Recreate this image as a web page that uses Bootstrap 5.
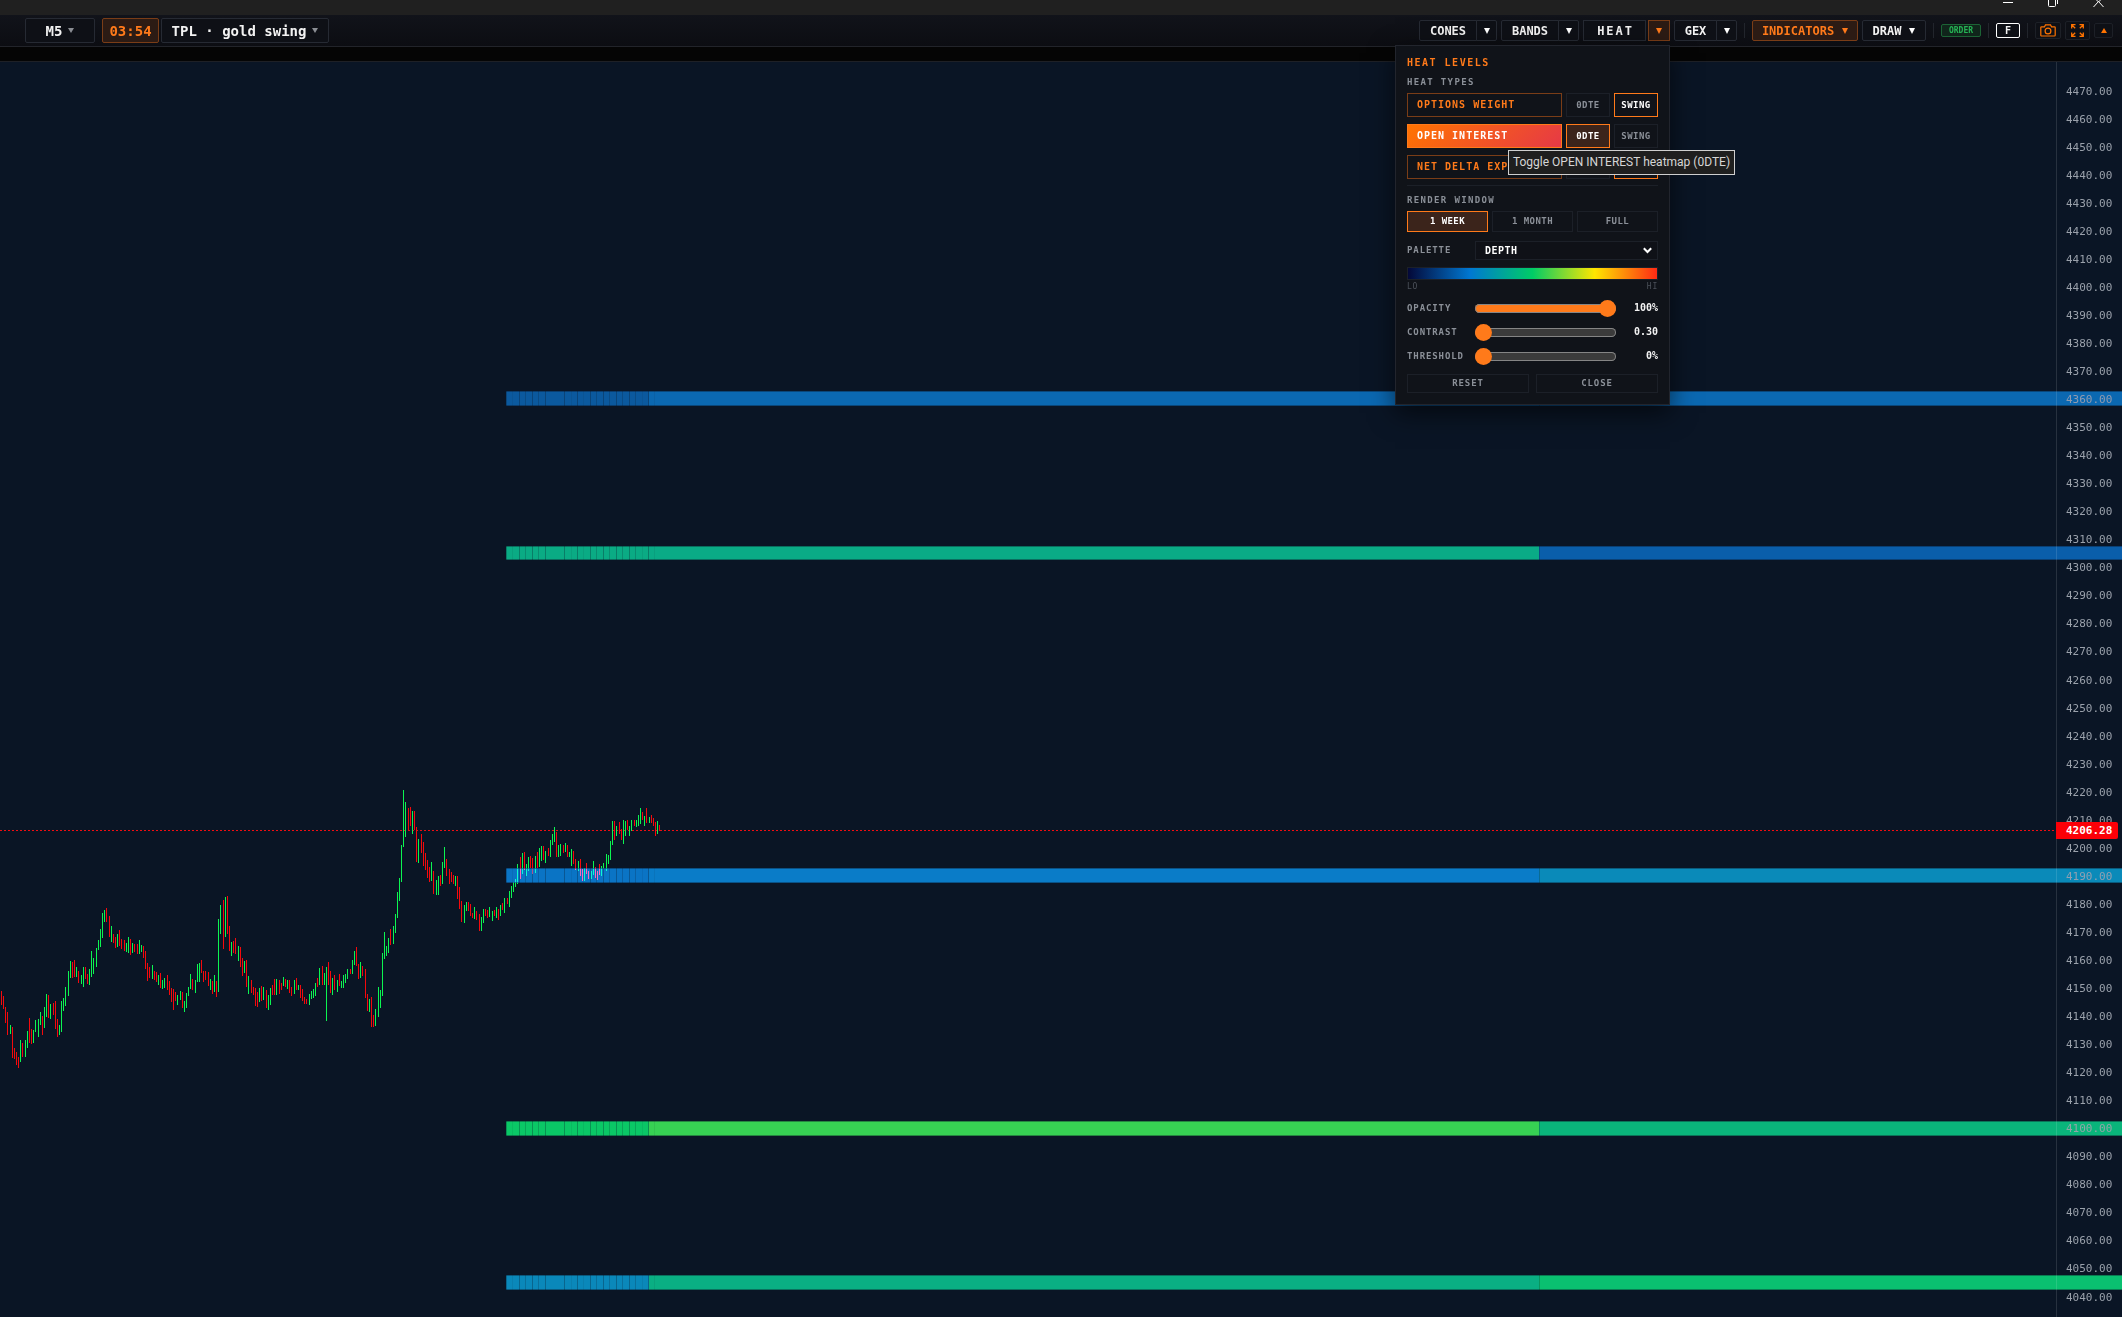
<!DOCTYPE html>
<html lang="en" data-bs-theme="dark">
<head>
<meta charset="utf-8">
<meta name="viewport" content="width=device-width, initial-scale=1">
<title>TPL · gold swing</title>
<link href="https://cdn.jsdelivr.net/npm/bootstrap@5.3.0/dist/css/bootstrap.min.css" rel="stylesheet">
<script src="https://cdn.jsdelivr.net/npm/bootstrap@5.3.0/dist/js/bootstrap.bundle.min.js" defer></script>
<style>
:root { --hot: #ff7a1a; --line: #22252d; --ink: #0f1118; --dim: #8b9098; }
body { background: #0a1525; font-family: "DejaVu Sans Mono", "Liberation Mono", monospace; font-size: 12px; line-height: 1; color: #f2f2f2; }
button { font-family: inherit; }
.titlebar { height: 15px; background: #202020; padding-right: 18px; gap: 34px; }
.titlebar button { background: none; border: 0; padding: 0; width: 11px; height: 8px; display: block; }
.titlebar svg, .tbtn svg { display: block; }
.toolbar { height: 32px; background: linear-gradient(#11131a, #0c0d12); border-bottom: 1px solid #22242a; padding: 0 9px 0 25px; }
.strip { height: 15px; background: #050505; border-bottom: 1px solid #1e2026; }
.tbtn { height: 21px; border: 1px solid #262a33; border-radius: 2px; background: #0e1016; color: #f2f2f2; font-size: 12px; font-weight: 700; line-height: 1; padding: 0; display: flex; align-items: center; justify-content: center; gap: 8px; flex: none; }
.tbtn.tall { height: 25px; font-size: 14px; gap: 6px; }
.tbtn.hot { color: var(--hot); background: #2c1b14; border-color: #7a3d17; }
.w-m5 { width: 70px; } .w-time { width: 57px; margin: 0 2px 0 7px; } .w-tpl { width: 168px; }
.w-main { width: 58px; } .w-gex { width: 43px; } .w-heat { width: 63px; letter-spacing: .16em; border-radius: 0; padding-left: 2px; }
.w-arrow { width: 20px; } .w-heatarrow { width: 22px; border-radius: 0; }
.pair .tbtn:first-child { border-radius: 2px 0 0 2px; margin-right: -1px; }
.pair .tbtn:last-child { border-radius: 0 2px 2px 0; width: 21px; }
.w-ind { width: 106px; } .w-draw { width: 64px; }
.w-order { width: 40px; height: 13px; font-size: 8px; color: #26b455; background: #10251b; border-color: #1c6335; }
.w-f { width: 24px; height: 15px; font-size: 10px; border-color: #fff; }
.w-cam { width: 26px; height: 17px; border-color: #1d2027; } .w-full { width: 25px; height: 19px; border-color: #1d2027; } .w-up { width: 19px; height: 15px; border-color: #1d2027; }
.rule { width: 1px; height: 15px; background: #22252c; flex: none; margin: 0 7px; }
.heatmenu { position: absolute; top: 25px; right: 0; width: 275px; z-index: 20; background: #101319; border: 1px solid #22252d; padding: 11px; box-shadow: 0 8px 24px rgba(0,0,0,.6); color: var(--dim); }
.heatmenu button { background: transparent; border: 1px solid #1c2028; color: var(--dim); font-size: 9px; font-weight: 700; letter-spacing: .05em; padding: 0; line-height: 1; height: 24px; }
.heatmenu .chip { width: 44px; flex: none; }
.heatmenu .kind { flex: 1; text-align: left; padding-left: 9px; color: var(--hot); border-color: #7a3d17; font-size: 10px; letter-spacing: .1em; }
.heatmenu .kind.live { background: linear-gradient(135deg, #ff7300, #e63946); border-color: var(--hot); color: #fff; }
.heatmenu .edge { border-color: var(--hot); color: #fff; }
.heatmenu .fill { background: #3b241b; }
.heatmenu .win { height: 21px; flex: 1; }
.heatmenu .foot { height: 19px; flex: 1; letter-spacing: .1em; }
.ttl { font-size: 10px; line-height: 11px; font-weight: 700; letter-spacing: .15em; color: var(--hot); margin: 0 0 9px; }
.sub { font-size: 9px; line-height: 10px; font-weight: 700; letter-spacing: .15em; color: var(--dim); margin: 0 0 6px; }
.rows { gap: 7px; }
.split { height: 1px; background: #1c2028; margin: 6px 0 9px; }
.pal { margin-top: 9px; }
.fld { width: 68px; flex: none; font-size: 9px; font-weight: 700; letter-spacing: .1em; }
.pal select { display: block; width: 100%; height: 19px; appearance: none; border: 1px solid #1c2028; border-radius: 0; background: #0f1117; color: #fff; font: 700 10px "DejaVu Sans Mono", monospace; letter-spacing: .05em; padding: 0 9px; }
.pal svg { position: absolute; right: 6px; top: 6px; pointer-events: none; }
.ramp { height: 13px; border: 1px solid #1c2028; background: linear-gradient(90deg, #040838, #0078d2 25%, #00cc66 50%, #ffe600 75%, #ff2a14); margin: 7px 0 2px; }
.ends { font-size: 8px; line-height: 9px; letter-spacing: .1em; color: #4c515a; margin-bottom: 5px; }
.slide { height: 24px; }
.slide output { flex: 1; padding: 0; text-align: right; font-size: 10px; font-weight: 700; color: #f2f2f2; }
input[type=range] { appearance: none; width: 141px; height: 17px; margin: 0; background: none; flex: none; }
input[type=range]::-webkit-slider-runnable-track { height: 9px; border-radius: 5px; background: #3b3b3b; box-shadow: inset 0 0 0 1px #858585; }
input[type=range].fullrun::-webkit-slider-runnable-track { background: var(--hot); }
input[type=range]::-webkit-slider-thumb { appearance: none; width: 17px; height: 17px; margin-top: -4px; border-radius: 50%; background: var(--hot); border: 0; }
.hint { position: absolute; left: 112px; top: 104px; height: 25px; width: 227px; border: 1px solid #cfcfcf; background: #1f1f1f; color: #d6d6d6; font: 12px/23px Roboto, "Open Sans", sans-serif; text-align: center; white-space: nowrap; }
.chart { min-height: 0; overflow: hidden; }
.plot { position: absolute; inset: 0; width: 100%; height: 100%; }
.scale { width: 66px; padding: 15px 0 6px 9px; border-left: 1px solid rgba(255,255,255,.12); margin: 0; list-style: none; font-size: 11px; color: #9aa1ab; }
.scale li { flex: 1 1 0; }
.scale .on { opacity: .85; color: #a8a4b0; }
.lastprice { position: absolute; right: 4px; top: 760px; width: 62px; height: 17px; background: #fb0007; color: #fff; font-size: 11px; font-weight: 700; line-height: 17px; padding-left: 10px; border-radius: 0 2px 2px 0; }
</style>
</head>
<body class="vh-100 d-flex flex-column overflow-hidden">
<div class="titlebar d-flex justify-content-end flex-shrink-0">
  <button aria-label="Minimize"><svg width="11" height="8"><path d="M0 2.500h10" stroke="#fff"/></svg></button>
  <button aria-label="Restore"><svg width="11" height="8"><path d="M.5 0v5.500q0 1 1 1h5q1 0 1-1V0M9.500 0v4" fill="none" stroke="#fff"/></svg></button>
  <button aria-label="Close"><svg width="11" height="8"><path d="M.5 7l5-5.500 5 5.500M3.500 0l2 2 2-2" fill="none" stroke="#fff"/></svg></button>
</div>
<nav class="toolbar d-flex align-items-center flex-shrink-0" aria-label="Chart toolbar">
  <button class="tbtn tall w-m5">M5 <svg width="6" height="5"><path d="M0 0h6L3 5z" fill="#8b8e94"/></svg></button>
  <button class="tbtn tall hot w-time">03:54</button>
  <button class="tbtn tall w-tpl">TPL · gold swing <svg width="6" height="5"><path d="M0 0h6L3 5z" fill="#8b8e94"/></svg></button>
  <div class="d-flex align-items-center ms-auto">
    <div class="pair d-flex"><button class="tbtn w-main">CONES</button><button class="tbtn w-arrow" aria-label="Cones menu"><svg width="6" height="6"><path d="M0 0h6L3 6z" fill="#fff"/></svg></button></div>
    <div class="pair d-flex ms-1"><button class="tbtn w-main">BANDS</button><button class="tbtn w-arrow" aria-label="Bands menu"><svg width="6" height="6"><path d="M0 0h6L3 6z" fill="#fff"/></svg></button></div>
    <div class="d-flex position-relative ms-1" style="gap:2px">
      <button class="tbtn w-heat">HEAT</button><button class="tbtn hot w-heatarrow" aria-label="Heat menu" aria-expanded="true"><svg width="6" height="6"><path d="M0 0h6L3 6z" fill="#ff7a1a"/></svg></button>
      <section class="heatmenu" aria-label="Heat levels">
        <h2 class="ttl">HEAT LEVELS</h2>
        <h3 class="sub">HEAT TYPES</h3>
        <div class="rows d-flex flex-column">
          <div class="d-flex gap-1"><button class="kind">OPTIONS WEIGHT</button><button class="chip">0DTE</button><button class="chip edge">SWING</button></div>
          <div class="d-flex gap-1"><button class="kind live">OPEN INTEREST</button><button class="chip edge fill" aria-describedby="tip">0DTE</button><button class="chip">SWING</button></div>
          <div class="d-flex gap-1"><button class="kind">NET DELTA EXP</button><button class="chip" aria-label="0DTE"></button><button class="chip edge" aria-label="SWING"></button></div>
        </div>
        <div class="split"></div>
        <h3 class="sub">RENDER WINDOW</h3>
        <div class="d-flex gap-1"><button class="win edge fill">1 WEEK</button><button class="win">1 MONTH</button><button class="win">FULL</button></div>
        <div class="d-flex align-items-center pal">
          <label class="fld" for="palette">PALETTE</label>
          <div class="position-relative flex-fill"><select id="palette"><option>DEPTH</option></select><svg width="9" height="7"><path d="M.8 1.200l3.700 3.800 3.700-3.800" fill="none" stroke="#fff" stroke-width="2"/></svg></div>
        </div>
        <div class="ramp"></div>
        <div class="ends d-flex justify-content-between"><span>LO</span><span>HI</span></div>
        <div class="slide d-flex align-items-center"><label class="fld" for="op">OPACITY</label><input class="fullrun" id="op" type="range" min="0" max="100" value="100"><output for="op">100%</output></div>
        <div class="slide d-flex align-items-center"><label class="fld" for="ct">CONTRAST</label><input id="ct" type="range" min="30" max="300" value="30"><output for="ct">0.30</output></div>
        <div class="slide d-flex align-items-center"><label class="fld" for="th">THRESHOLD</label><input id="th" type="range" min="0" max="100" value="0"><output for="th">0%</output></div>
        <div class="d-flex rows" style="padding-top:6px"><button class="foot">RESET</button><button class="foot">CLOSE</button></div>
        <div class="hint" id="tip" role="tooltip">Toggle OPEN INTEREST heatmap (0DTE)</div>
      </section>
    </div>
    <div class="pair d-flex ms-1"><button class="tbtn w-gex">GEX</button><button class="tbtn w-arrow" aria-label="GEX menu"><svg width="6" height="6"><path d="M0 0h6L3 6z" fill="#fff"/></svg></button></div>
    <span class="rule"></span>
    <button class="tbtn hot w-ind">INDICATORS <svg width="6" height="6"><path d="M0 0h6L3 6z" fill="#ff7a1a"/></svg></button>
    <button class="tbtn w-draw ms-1">DRAW <svg width="6" height="6"><path d="M0 0h6L3 6z" fill="#fff"/></svg></button>
    <span class="rule"></span>
    <button class="tbtn w-order">ORDER</button>
    <span class="rule"></span>
    <button class="tbtn w-f">F</button>
    <span class="rule"></span>
    <button class="tbtn w-cam" aria-label="Screenshot"><svg width="16" height="13" fill="none" stroke="#ff7300" stroke-width="1.200"><path d="M1.600 2.800H4.500L5.500.8h5l1 2h2.900q.8 0 .8.8v7.600q0 .8-.8.8H1.600q-.8 0-.8-.8V3.600q0-.8.8-.8z"/><circle cx="8" cy="7" r="2.900"/></svg></button>
    <button class="tbtn w-full mx-1" aria-label="Full screen"><svg width="13" height="13" fill="none" stroke="#ff7300" stroke-width="1.300"><path d="M.7 4.500V.7H4.500M.7.7l3.500 3.500M8.500.7h3.800V4.500M12.300.7L8.800 4.200M.7 8.500v3.800H4.500M.7 12.300l3.500-3.500M8.500 12.300h3.800V8.500M12.300 12.300L8.800 8.800"/></svg></button>
    <button class="tbtn w-up" aria-label="Collapse"><svg width="6" height="5"><path d="M0 5h6L3 0z" fill="#ff7300"/></svg></button>
  </div>
</nav>
<div class="strip flex-shrink-0"></div>
<main class="chart flex-fill position-relative d-flex justify-content-end">
  <svg class="plot" id="plot" shape-rendering="crispEdges" role="img" aria-label="Gold price with heat levels"></svg>
  <ul class="scale d-flex flex-column position-relative" id="scale"></ul>
  <div class="lastprice">4206.28</div>
</main>
<script>
const scale = document.getElementById('scale');
const covered = [4360, 4190, 4100];
for (let p = 4470; p >= 4040; p -= 10) {
  const li = document.createElement('li');
  li.className = 'd-flex align-items-center' + (covered.includes(p) ? ' on' : '');
  li.textContent = p.toFixed(2);
  scale.append(li);
}
// Candle ranges on a grid of thirds of a pixel: direction, x, high, low
const runs = [
 [0, 778, `r4 453 495,r10 468 507,r16 501 549,r22 516 585,g31 555 582,r37 561 654,r43 624 657,r49 636 675,r55 651 684,g61 600 666,r67 609 651,g76 600 651,g82 573 624,r88 534 609,r94 567 612,g100 570 609,g106 540 576,g115 537 591,g121 516 555,r127 528 585,g133 501 564,g139 462 531,r145 465 534,g151 492 537,r160 489 525,r166 483 567,r172 537 591,g178 555 585,g184 483 576,g190 474 513,g196 441 498,g205 393 468,g211 363 414,r217 366 414,r223 360 411,g229 381 411,r235 393 430,g244 405 432,g250 381 441,r256 381 417,r262 402 432,g268 387 435,g274 333 411,g280 354 402,g289 324 381,g295 300 330,g301 267 321,g307 219 294,g313 210 246,r319 204 246,r328 228 291,g334 258 306,r340 282 309,r346 291 324,g352 282 321,r358 270 318,r364 297 327,r373 300 333,g379 309 336,g385 291 339,r391 297 345,g397 309 339,r403 312 336,r412 312 342,g418 300 342,g424 315 336,r430 318 354,r436 333 387,r442 369 423,r448 381 414,g457 375 417,r463 393 420,r469 396 426,g475 405 435,r481 399 444,g487 420 447,g493 414 444,r502 405 450,r508 423 465,r514 444 486,r520 447 510,r526 456 483,g532 465 495,g541 453 480,r547 456 504,g553 483 516,g559 459 504,g565 441 468,g571 402 447,r577 417 450,g586 420 459,g592 372 426,g598 369 426`],
 [200, 778, `r4 360 399,r10 393 426,r16 393 420,r25 396 438,g31 417 450,r37 423 462,g43 405 456,r49 423 471,g55 237 456,g61 195 282,r70 180 327,g76 171 291,r82 168 282,r88 258 333,g94 306 348,r100 303 339,r106 294 342,g115 318 363,r121 321 381,r127 354 408,g133 363 399,r139 360 441,g145 408 462,r154 420 459,r160 441 465,r166 444 498,r172 456 501,g178 444 486,r184 438 483,g190 441 480,r199 450 504,g205 465 510,g211 444 495,r217 435 465,r223 417 465,g229 417 465,r238 420 462,r244 429 450,g250 411 438,r256 417 441,g262 420 447,r268 420 459,r274 441 468,g283 420 462,r289 414 450,g295 435 450,r301 435 474,r307 447 483,r313 471 492,r319 477 492,g328 462 495,g334 453 477,g340 447 474,g346 429 468,r352 414 441,g358 384 435,r367 378 435,g373 399 435,g379 381 543,r385 366 435,r391 393 459,g397 414 465,r403 405 450,g412 420 456,r418 402 438,g424 423 444,g430 405 444,g436 402 429,g442 387 417,r451 387 402,g457 360 402,g463 333 375,r469 321 378,r475 372 417,g481 366 414,r487 378 408,r496 387 474,r502 462 513,g508 477 516,r514 471 561,r520 525 561,g526 507 558,g535 441 531`],
 [380, 708, `g1 660 714,g7 549 678,g13 486 567,g19 528 558,g25 504 549,r31 477 525,g40 468 522,g46 432 489,g52 366 444,g58 324 393,g64 225 336,g70 60 231,g76 96 201,r85 114 183,r91 111 168,g97 123 192,r103 123 180,r109 171 276,g115 207 279,r124 192 249,r130 216 288,r136 249 300,r142 270 324,r148 291 336,g154 276 333,r160 303 372,g169 330 375,g175 318 375,r181 315 348,g187 276 342,g193 231 294,r199 267 318,r208 297 342,r214 306 336,r220 315 342,g226 318 348,r232 318 387,r238 351 417,r244 393 456,g253 405 459,g259 396 423,r265 396 423,r271 402 438,r277 429 444,g283 411 447,r289 423 450,r298 432 483,g304 441 483,g310 417 459,r316 417 438,r322 420 444,g328 411 441,g337 423 453,r343 420 438,g349 411 444,r355 417 450,g361 405 438,r367 399 420,g373 384 429,r382 384 402,g388 363 411,g394 348 384,g400 336 366,g406 327 351,g412 282 342,r421 261 327,g427 249 312,r433 246 300,g439 282 318,g445 261 303,r451 258 294,r457 264 312,g466 258 309,r472 246 294,g478 234 291,g484 228 273,r490 228 270,g496 243 279,r505 234 258,g511 210 261,g517 192 225,g523 171 216,r529 186 261,g535 225 261,g541 222 258,r550 225 249,g556 219 246,r562 225 261,g568 246 261,g574 237 288,r580 243 282,r586 267 300,g595 273 303,r601 267 318,r607 297 333,g613 294 333,r619 279 312,r625 303 327,g634 303 327,g640 273 315,r646 291 324,r652 303 330,r658 282 315,g664 288 318,g670 279 297,g679 252 303,g685 255 282,g691 213 270,g697 153 225,r703 153 210,g709 168 198,r718 156 192,r724 177 210,g730 150 222,g736 153 198,r742 150 180,g748 168 198,g754 150 183,r763 150 168,g769 150 171,g775 135 168,g781 114 162,r787 126 150,g793 138 168,r799 114 159,g808 141 159,r814 135 159,r820 144 168,r826 156 198,g832 153 192,r838 165 183`]
];
let out = '<line x1="0" x2="97%" y1="768.5" y2="768.5" stroke="#f00d12" stroke-dasharray="2 2"/>';
for (const [ox, oy, list] of runs) for (const c of list.split(',')) {
  const [x, a, b] = c.slice(1).split(' ').map(Number);
  out += `<rect x="${ox + Math.floor(x / 3)}" y="${Math.round(oy + a / 3)}" width="1" height="${Math.round((b - a) / 3)}" fill="${c[0] === 'g' ? '#0cf551' : '#f5090c'}"/>`;
}
// Heat levels: top, height, left, middle and right colour
const levels = [[329,15,'#014a8e','#015aa4','#015aa4'],[484,14,'#00a36f','#00a371','#00509c'],[806,15,'#0067bb','#0070bf','#0080ad'],[1059,15,'#00c24c','#2fcd36','#00ae65'],[1213,15,'#007dae','#00a86e','#00ba58']];
const cuts = [0,13,19,26,32,39,58,71,84,90,97,103,110,116,123,129,142];
const faint = [6,65,77,136,148];
out += '<g style="mix-blend-mode:screen">';
for (const [y, h, a, b, c] of levels) {
  out += `<rect x="506" y="${y}" width="143" height="${h}" fill="${a}"/><rect x="649" y="${y}" width="890" height="${h}" fill="${b}"/><rect x="1539" y="${y}" width="100%" height="${h}" fill="${c}"/>`;
}
out += '</g><g fill="#0a1525">';
for (const [y, h] of levels) {
  out += `<rect x="506" y="${y}" width="100%" height="1" opacity=".4"/><rect x="506" y="${y + h - 1}" width="100%" height="1" opacity=".4"/><rect x="1539" y="${y}" width="1" height="${h}" opacity=".25"/>`;
  cuts.forEach(k => out += `<rect x="${506 + k}" y="${y}" width="1" height="${h}" opacity="${[19,32,90,103,116,129].includes(k) ? .2 : .3}"/>`);
  faint.forEach(k => out += `<rect x="${506 + k}" y="${y}" width="1" height="${h}" opacity=".08"/>`);
}
document.getElementById('plot').innerHTML = out + '</g>';
</script>
</body>
</html>
